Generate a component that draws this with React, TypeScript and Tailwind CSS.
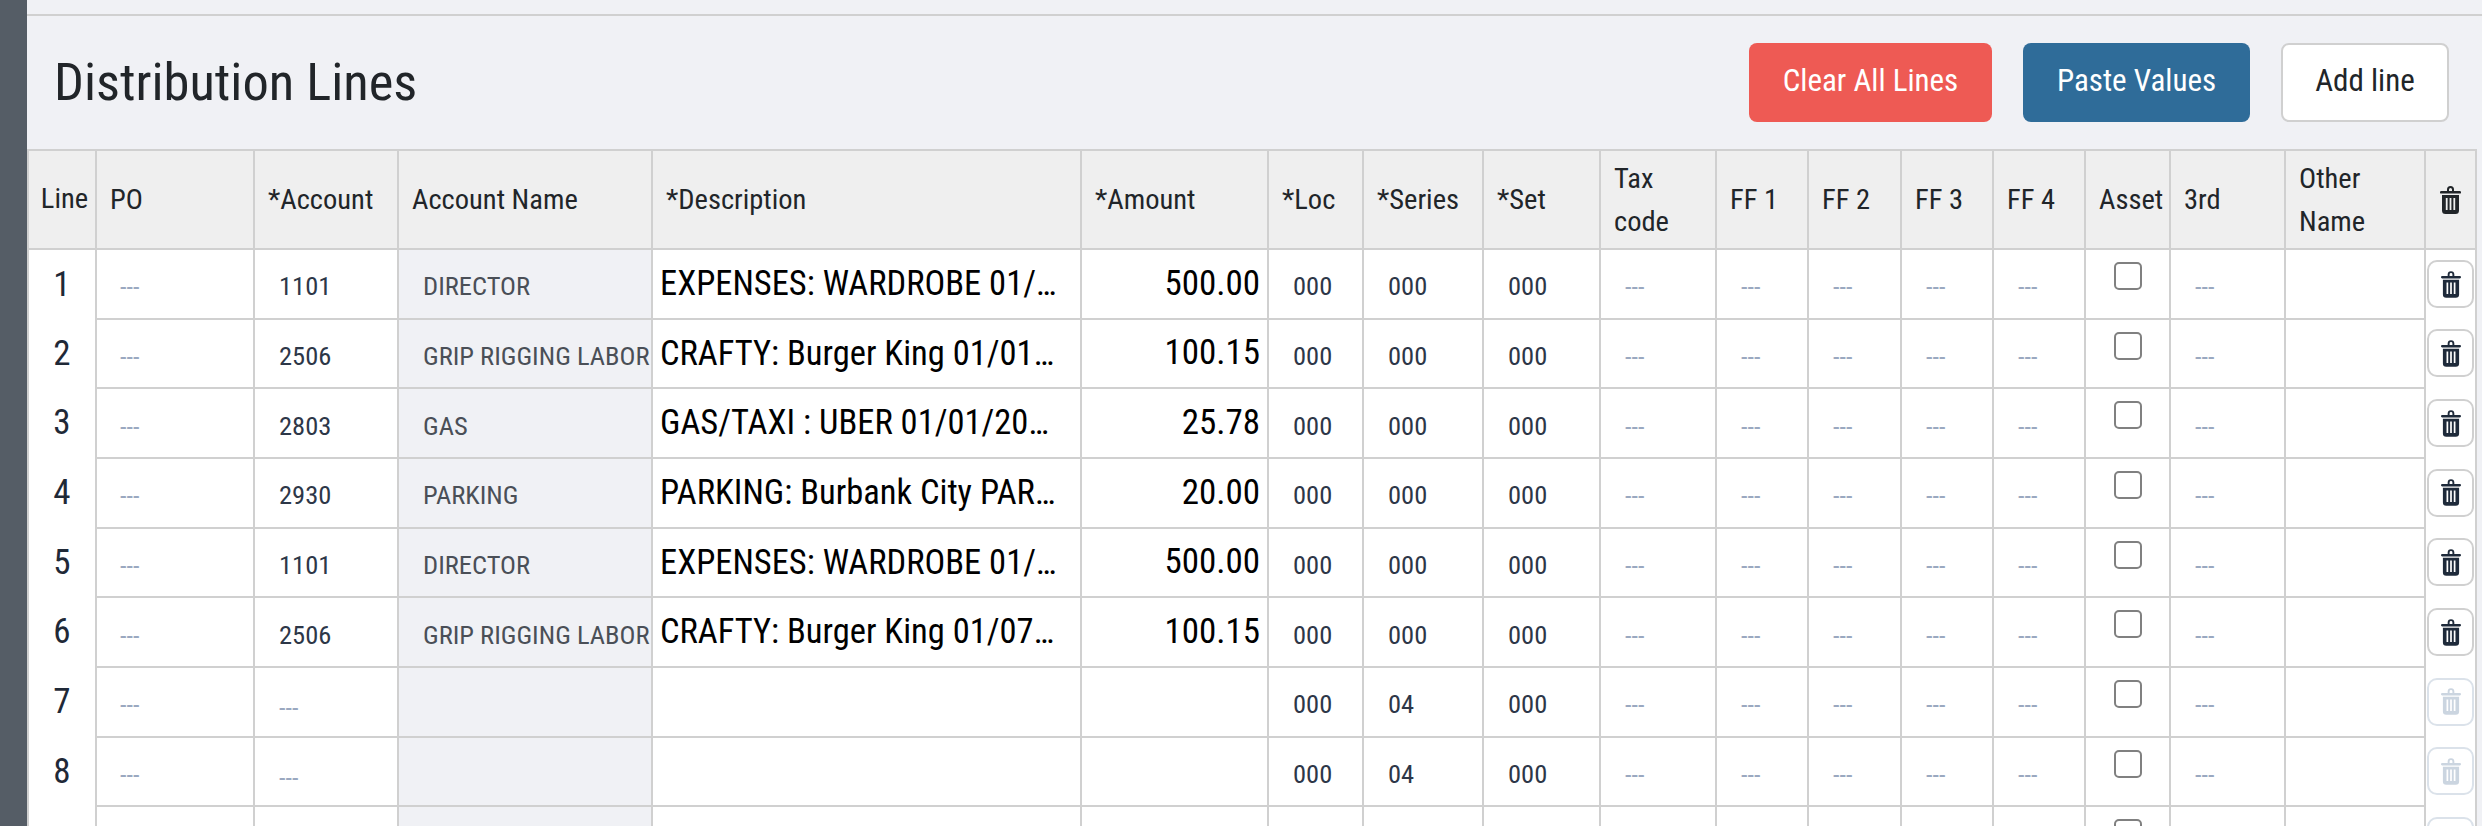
const rows = [
  { n: 1, account: "1101", name: "DIRECTOR", desc: "EXPENSES: WARDROBE 01/01/2024", amount: "500.00", series: "000" },
  { n: 2, account: "2506", name: "GRIP RIGGING LABOR", desc: "CRAFTY: Burger King 01/01/2024", amount: "100.15", series: "000" },
  { n: 3, account: "2803", name: "GAS", desc: "GAS/TAXI : UBER 01/01/2024 LAX", amount: "25.78", series: "000" },
  { n: 4, account: "2930", name: "PARKING", desc: "PARKING: Burbank City PARKING 01/01", amount: "20.00", series: "000" },
  { n: 5, account: "1101", name: "DIRECTOR", desc: "EXPENSES: WARDROBE 01/07/2024", amount: "500.00", series: "000" },
  { n: 6, account: "2506", name: "GRIP RIGGING LABOR", desc: "CRAFTY: Burger King 01/07/2024", amount: "100.15", series: "000" },
  { n: 7, account: "", name: "", desc: "", amount: "", series: "04" },
  { n: 8, account: "", name: "", desc: "", amount: "", series: "04" },
  { n: 9, account: "", name: "", desc: "", amount: "", series: "04" },
];

function TrashIcon({ className }: { className?: string }) {
  return (
    <svg viewBox="0 0 21 28" className={className} fill="currentColor">
      <path d="M7 5V3.500a3.500 3.500 0 0 1 7 0V5h-2V3.500a1.500 1.500 0 0 0-3 0V5z" />
      <rect x="0" y="5" width="21" height="2.600" rx="1.200" />
      <path fillRule="evenodd" d="M2 9h17v15.500a3.500 3.500 0 0 1-3.500 3.500h-10a3.500 3.500 0 0 1-3.500-3.500zM5.800 12v12h1.800V12zM9.600 12v12h1.800V12zM13.400 12v12h1.800V12z" />
    </svg>
  );
}

function Dash() {
  return <span className="relative top-[4px] text-[26px] text-[#9aa8c0]">---</span>;
}

const th = "border-2 border-[#d0d0d0] px-[13px] text-left align-middle text-[28.5px] font-normal leading-[43px] text-[#212529]";
const td = "border-2 border-[#d0d0d0] p-0 align-middle";
const small = "pt-[5px] pl-[24px] text-[26.5px] text-[#2d3748]";

export default function App() {
  return (
    <div className="h-[826px] w-[2482px] overflow-hidden bg-[#f0f1f5] font-['Roboto',sans-serif] [font-stretch:85%]">
      <div className="flex h-full">
        <div className="w-[27px] shrink-0 bg-[#555d66]" />
        <div className="min-w-0 flex-1">
          <div className="h-[16px] border-b-2 border-[#d0d0d0]" />
          <div className="flex h-[133px] items-center justify-between pr-[33px] pl-[27px]">
            <h2 className="text-[52.500px] font-normal text-[#212529]">Distribution Lines</h2>
            <div className="flex gap-[31px]">
              <button className="h-[79px] w-[243px] rounded-[8px] bg-[#ee5a54] pb-[2px] text-[31px] text-white">Clear All Lines</button>
              <button className="h-[79px] w-[227px] rounded-[8px] bg-[#2f6c99] pb-[2px] text-[31px] text-white">Paste Values</button>
              <button className="h-[79px] w-[168px] rounded-[8px] border-2 border-[#d0d0d0] bg-white pb-[2px] text-[31px] text-[#212529]">Add line</button>
            </div>
          </div>
          <table className="w-[2448px] table-fixed border-collapse bg-white">
            <colgroup>
              <col className="w-[68px]" />
              <col className="w-[158px]" />
              <col className="w-[144px]" />
              <col className="w-[254px]" />
              <col className="w-[429px]" />
              <col className="w-[187px]" />
              <col className="w-[95px]" />
              <col className="w-[120px]" />
              <col className="w-[117px]" />
              <col className="w-[116px]" />
              <col className="w-[92px]" />
              <col className="w-[93px]" />
              <col className="w-[92px]" />
              <col className="w-[92px]" />
              <col className="w-[85px]" />
              <col className="w-[115px]" />
              <col className="w-[140px]" />
              <col className="w-[51px]" />
            </colgroup>
            <thead>
              <tr className="h-[99px] bg-[#efefef]">
                <th className="border-2 border-[#d0d0d0] p-0 pl-[5px] text-center text-[28.5px] font-normal text-[#212529]">Line</th>
                <th className={th}>PO</th>
                <th className={th}>*Account</th>
                <th className={th}>Account Name</th>
                <th className={th}>*Description</th>
                <th className={th}>*Amount</th>
                <th className={th}>*Loc</th>
                <th className={th}>*Series</th>
                <th className={th}>*Set</th>
                <th className={th}>Tax code</th>
                <th className={th}>FF 1</th>
                <th className={th}>FF 2</th>
                <th className={th}>FF 3</th>
                <th className={th}>FF 4</th>
                <th className={th}>Asset</th>
                <th className={th}>3rd</th>
                <th className={th}>Other Name</th>
                <th className="border-2 border-[#d0d0d0] p-0 text-[#212529]">
                  <TrashIcon className="mx-auto h-[28px] w-[21px]" />
                </th>
              </tr>
            </thead>
            <tbody>
              {rows.map((r) => {
                const filled = r.account !== "";
                return (
                  <tr key={r.n} className="h-[69.67px]">
                    <td className="border-x-2 border-[#d0d0d0] p-0 pt-[1px] text-center text-[35px] text-[#1f2937]">{r.n}</td>
                    <td className={td + " pl-[23px]"}><Dash /></td>
                    <td className={td + " " + small}>{filled ? r.account : <Dash />}</td>
                    <td className={td + " overflow-hidden bg-[#f0f1f5] pt-[5px] pl-[24px] text-[26.5px] whitespace-nowrap text-[#4a4f57]"}>{r.name}</td>
                    <td className={td + " truncate pr-[18px] pl-[7px] text-[34.500px] text-black"}>{r.desc}</td>
                    <td className={td + " pr-[7px] text-right text-[35px] text-black"}>{r.amount}</td>
                    <td className={td + " " + small}>000</td>
                    <td className={td + " " + small}>{r.series}</td>
                    <td className={td + " " + small}>000</td>
                    <td className={td + " pl-[24px]"}><Dash /></td>
                    <td className={td + " pl-[24px]"}><Dash /></td>
                    <td className={td + " pl-[24px]"}><Dash /></td>
                    <td className={td + " pl-[24px]"}><Dash /></td>
                    <td className={td + " pl-[24px]"}><Dash /></td>
                    <td className={td + " align-top"}>
                      <div className="mx-auto mt-[12px] h-[28px] w-[28px] rounded-[5px] border-2 border-[#808080]" />
                    </td>
                    <td className={td + " pl-[24px]"}><Dash /></td>
                    <td className={td} />
                    <td className="border-x-2 border-[#d0d0d0] p-0">
                      <div
                        className={
                          "ml-[1px] flex h-[48px] w-[47px] items-center justify-center rounded-[10px] border-2 " +
                          (filled ? "border-[#d0d0d0] text-[#1e2a3a]" : "border-[#dbe2ea] text-[#cbd5e0]")
                        }
                      >
                        <TrashIcon className="h-[27px] w-[20px]" />
                      </div>
                    </td>
                  </tr>
                );
              })}
            </tbody>
          </table>
        </div>
      </div>
    </div>
  );
}
